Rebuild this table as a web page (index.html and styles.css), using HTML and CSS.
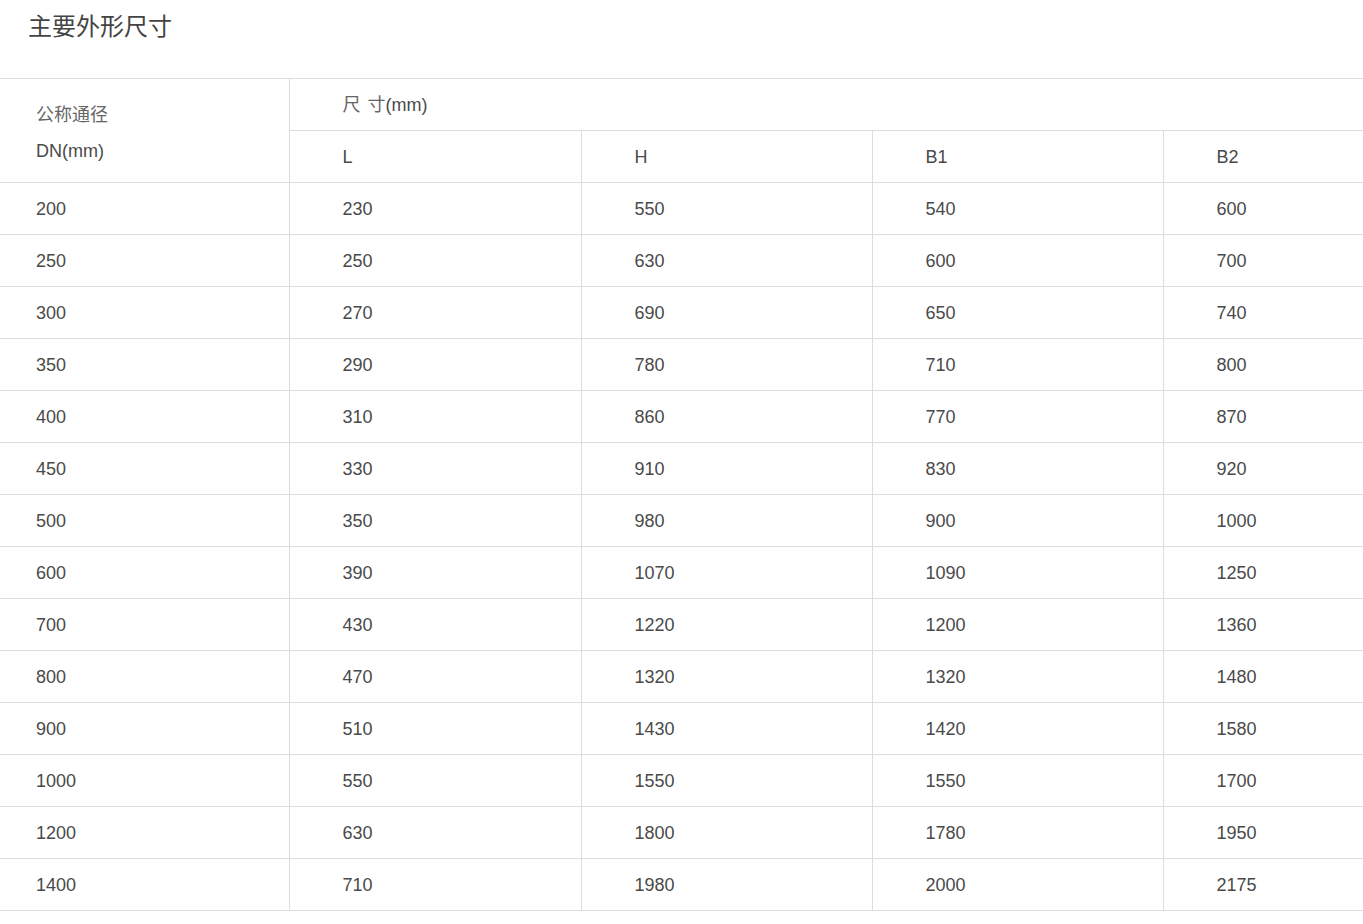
FILE: index.html
```html
<!DOCTYPE html>
<html lang="zh-CN">
<head>
<meta charset="utf-8">
<title>主要外形尺寸</title>
<link rel="stylesheet" href="styles.css">
</head>
<body>
<h2 class="title">主要外形尺寸</h2>
<table class="dims">
  <colgroup>
    <col class="c0"><col class="c1"><col class="c2"><col class="c3"><col class="c4">
  </colgroup>
  <thead>
    <tr>
      <th rowspan="2" class="first head-dn"><span class="cjk">公称通径</span><br>DN(mm)</th>
      <th colspan="4" class="head-size"><span class="cjk">尺 寸</span>(mm)</th>
    </tr>
    <tr>
      <th>L</th><th>H</th><th>B1</th><th>B2</th>
    </tr>
  </thead>
  <tbody>
    <tr><td class="first">200</td><td>230</td><td>550</td><td>540</td><td>600</td></tr>
    <tr><td class="first">250</td><td>250</td><td>630</td><td>600</td><td>700</td></tr>
    <tr><td class="first">300</td><td>270</td><td>690</td><td>650</td><td>740</td></tr>
    <tr><td class="first">350</td><td>290</td><td>780</td><td>710</td><td>800</td></tr>
    <tr><td class="first">400</td><td>310</td><td>860</td><td>770</td><td>870</td></tr>
    <tr><td class="first">450</td><td>330</td><td>910</td><td>830</td><td>920</td></tr>
    <tr><td class="first">500</td><td>350</td><td>980</td><td>900</td><td>1000</td></tr>
    <tr><td class="first">600</td><td>390</td><td>1070</td><td>1090</td><td>1250</td></tr>
    <tr><td class="first">700</td><td>430</td><td>1220</td><td>1200</td><td>1360</td></tr>
    <tr><td class="first">800</td><td>470</td><td>1320</td><td>1320</td><td>1480</td></tr>
    <tr><td class="first">900</td><td>510</td><td>1430</td><td>1420</td><td>1580</td></tr>
    <tr><td class="first">1000</td><td>550</td><td>1550</td><td>1550</td><td>1700</td></tr>
    <tr><td class="first">1200</td><td>630</td><td>1800</td><td>1780</td><td>1950</td></tr>
    <tr><td class="first">1400</td><td>710</td><td>1980</td><td>2000</td><td>2175</td></tr>
  </tbody>
</table>
</body>
</html>
```

FILE: styles.css
```css
html, body {
  margin: 0;
  padding: 0;
  background: #fff;
}

body {
  font-family: "Liberation Sans", "Noto Sans CJK SC", sans-serif;
  color: #4a4a4a;
}

.title {
  margin: 0 0 28px 0;
  padding-left: 28px;
  height: 50px;
  line-height: 50px;
  font-size: 24px;
  font-weight: normal;
  color: #444;
  font-family: "Noto Sans CJK SC", sans-serif;
}

.dims {
  border-collapse: collapse;
  table-layout: fixed;
  width: 1364px;
  font-size: 18px;
}

.c0 { width: 289px; }
.c1 { width: 292px; }
.c2 { width: 291px; }
.c3 { width: 291px; }
.c4 { width: 201px; }

.dims th,
.dims td {
  height: 49px;
  padding: 2px 0 0 53px;
  border: 1px solid #dddddd;
  text-align: left;
  vertical-align: middle;
  font-weight: normal;
  color: #4a4a4a;
  white-space: nowrap;
}

.dims .first {
  padding-left: 36px;
  border-left: none;
}

.dims tr > :last-child {
  border-right: none;
}

.head-dn {
  line-height: 36px;
  padding-top: 0;
  padding-bottom: 1px;
}

.dims .head-size {
  line-height: 20px;
  padding-top: 0;
  padding-bottom: 2px;
}

.cjk {
  font-family: "Noto Sans CJK SC", sans-serif;
  color: #666;
  font-size: 18px;
  word-spacing: 3px;
}
```
